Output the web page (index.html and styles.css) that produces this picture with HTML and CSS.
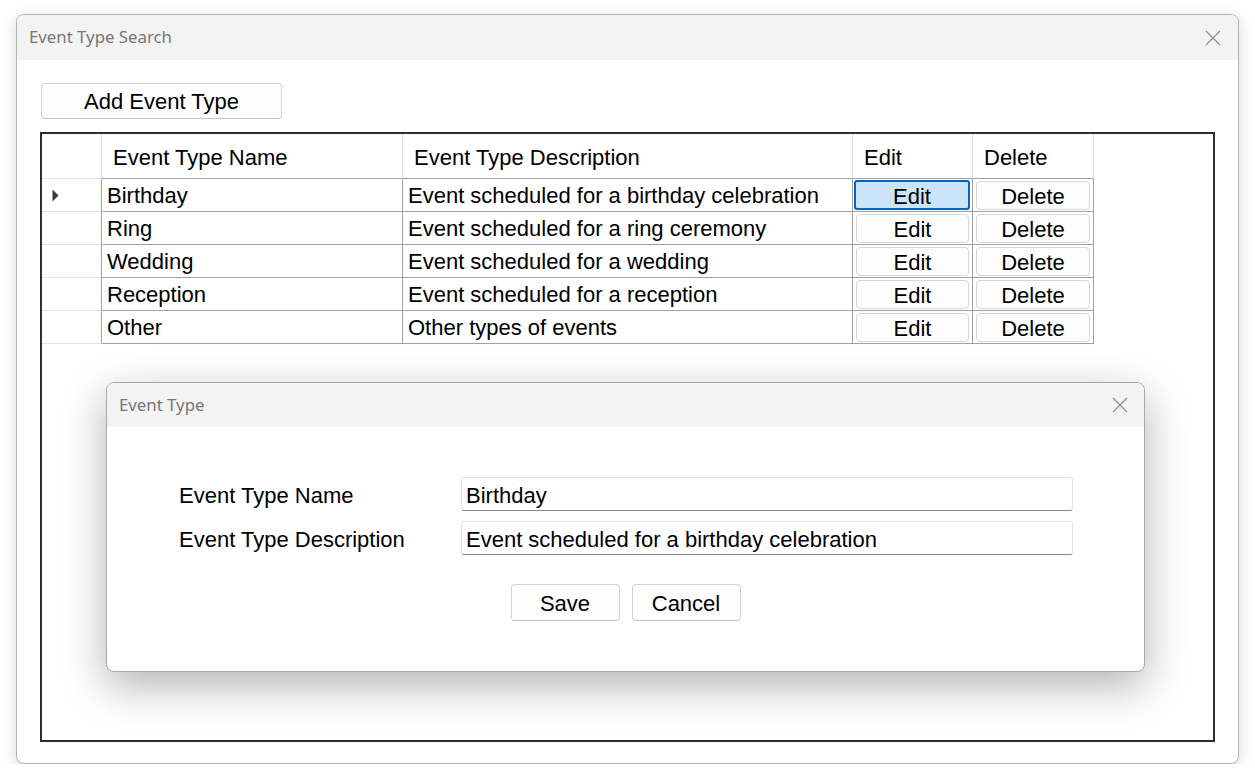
FILE: index.html
```html
<!DOCTYPE html>
<html>
<head>
<meta charset="utf-8">
<title>Event Type Search</title>
<link rel="stylesheet" href="styles.css">
</head>
<body>
<div class="window">
  <div class="titlebar">
    <span class="title">Event Type Search</span>
    <svg class="close" width="16" height="16" viewBox="0 0 16 16"><path d="M1 1 L15 15 M15 1 L1 15" stroke="#8a8a8a" stroke-width="1.1" fill="none"/></svg>
  </div>
  <div class="content">
    <button class="btn add">Add Event Type</button>
    <div class="panel">
      <div class="grid">
        <div class="hcell rh"></div>
        <div class="hcell">Event Type Name</div>
        <div class="hcell">Event Type Description</div>
        <div class="hcell">Edit</div>
        <div class="hcell">Delete</div>

        <div class="cell rh"><svg class="arrow" width="7" height="13" viewBox="0 0 7 13"><path d="M0.5 0.5 L6.5 6.5 L0.5 12.5 Z" fill="#3a3a3a"/></svg></div>
        <div class="cell">Birthday</div>
        <div class="cell">Event scheduled for a birthday celebration</div>
        <div class="cell bcell"><button class="gbtn sel">Edit</button></div>
        <div class="cell bcell"><button class="gbtn">Delete</button></div>

        <div class="cell rh"></div>
        <div class="cell">Ring</div>
        <div class="cell">Event scheduled for a ring ceremony</div>
        <div class="cell bcell"><button class="gbtn">Edit</button></div>
        <div class="cell bcell"><button class="gbtn">Delete</button></div>

        <div class="cell rh"></div>
        <div class="cell">Wedding</div>
        <div class="cell">Event scheduled for a wedding</div>
        <div class="cell bcell"><button class="gbtn">Edit</button></div>
        <div class="cell bcell"><button class="gbtn">Delete</button></div>

        <div class="cell rh"></div>
        <div class="cell">Reception</div>
        <div class="cell">Event scheduled for a reception</div>
        <div class="cell bcell"><button class="gbtn">Edit</button></div>
        <div class="cell bcell"><button class="gbtn">Delete</button></div>

        <div class="cell rh"></div>
        <div class="cell">Other</div>
        <div class="cell">Other types of events</div>
        <div class="cell bcell"><button class="gbtn">Edit</button></div>
        <div class="cell bcell"><button class="gbtn">Delete</button></div>
      </div>
    </div>
  </div>

  <div class="dialog">
    <div class="titlebar dtitle">
      <span class="title">Event Type</span>
      <svg class="close" width="16" height="16" viewBox="0 0 16 16"><path d="M1 1 L15 15 M15 1 L1 15" stroke="#8a8a8a" stroke-width="1.1" fill="none"/></svg>
    </div>
    <div class="dbody">
      <div class="form">
        <label class="lbl">Event Type Name</label>
        <div class="input">Birthday</div>
        <label class="lbl">Event Type Description</label>
        <div class="input">Event scheduled for a birthday celebration</div>
      </div>
      <div class="actions">
        <button class="btn act">Save</button>
        <button class="btn act">Cancel</button>
      </div>
    </div>
  </div>
</div>
</body>
</html>
```

FILE: styles.css
```css
body {
  margin: 0;
  background: #ffffff;
  font-family: "Liberation Sans", Arial, sans-serif;
}

.window {
  position: relative;
  margin: 14px 0 0 16px;
  width: 1223px;
  height: 750px;
  box-sizing: border-box;
  border: 1px solid #b3b3b3;
  border-radius: 8px;
  background: #ffffff;
  box-shadow: 0 3px 14px rgba(0, 0, 0, 0.16);
  display: flex;
  flex-direction: column;
}

.titlebar {
  height: 45px;
  flex: none;
  background: #f3f3f3;
  border-radius: 7px 7px 0 0;
  display: flex;
  align-items: center;
  justify-content: space-between;
  padding: 0 17px 0 12px;
}

.title {
  font-family: "Segoe UI", "Noto Sans", sans-serif;
  font-size: 16.8px;
  color: #777777;
  margin-top: -2px;
}

.close {
  display: block;
}

.content {
  flex: 1;
  display: flex;
  flex-direction: column;
  align-items: flex-start;
  gap: 13px;
  padding: 23px 23px 21px 23px;
  min-height: 0;
}

.btn {
  font-family: "Liberation Sans", Arial, sans-serif;
  font-size: 22px;
  color: #000;
  background: #fdfdfd;
  border: 1px solid #d3d3d3;
  border-bottom-color: #c2c2c2;
  border-radius: 4px;
  padding: 2px 0 0 0;
  box-sizing: border-box;
}

.add {
  width: 241px;
  height: 36px;
  margin-left: 1px;
}

.panel {
  align-self: stretch;
  flex: 1;
  border: 2px solid #2e2e2e;
  background: #ffffff;
}

.grid {
  display: grid;
  grid-template-columns: 60px 301px 450px 120px 121px;
  grid-template-rows: 45px repeat(5, 33px);
  font-size: 22px;
  color: #000;
}

.hcell {
  box-sizing: border-box;
  border-right: 1px solid #dcdcdc;
  border-bottom: 1px solid #a0a0a0;
  padding: 3px 0 0 11px;
  display: flex;
  align-items: center;
  white-space: nowrap;
}

.cell {
  box-sizing: border-box;
  border-right: 1px solid #a0a0a0;
  border-bottom: 1px solid #a0a0a0;
  padding: 2px 0 0 5px;
  display: flex;
  align-items: center;
  white-space: nowrap;
}

.cell.rh {
  border-bottom-color: #e4e4e4;
  padding: 1px 0 0 10px;
}

.hcell.rh {
  border-bottom-color: #e4e4e4;
}

.arrow {
  display: block;
}

.bcell {
  padding: 1px 2px 1px 1px;
  align-items: stretch;
}

.gbtn {
  flex: 1;
  font-family: "Liberation Sans", Arial, sans-serif;
  font-size: 22px;
  color: #000;
  background: #fdfdfd;
  border: 1px solid #d6d6d6;
  border-radius: 4px;
  margin: 1px 1px 0 2px;
  padding: 2px 0 0 0;
  box-sizing: border-box;
}

.gbtn.sel {
  background: #cce4f7;
  border: 2px solid #0067c0;
  border-radius: 3px;
  margin: 0;
}

.dialog {
  position: absolute;
  left: 89px;
  top: 367px;
  width: 1039px;
  height: 290px;
  box-sizing: border-box;
  border: 1px solid #a8a8a8;
  border-radius: 8px;
  background: #ffffff;
  box-shadow: 0 14px 44px rgba(0, 0, 0, 0.3);
  display: flex;
  flex-direction: column;
}

.dtitle {
  height: 44px;
  padding: 0 16px 0 12px;
}

.dbody {
  flex: 1;
  display: flex;
  flex-direction: column;
  padding-top: 50px;
}

.form {
  margin-left: 72px;
  display: grid;
  grid-template-columns: 282px 612px;
  grid-auto-rows: 34px;
  row-gap: 10px;
}

.lbl {
  font-size: 22px;
  color: #000;
  display: flex;
  align-items: center;
  padding-top: 3px;
}

.input {
  box-sizing: border-box;
  border: 1px solid #e2e2e2;
  border-bottom: 1px solid #868686;
  border-radius: 3px;
  padding: 3px 0 0 4px;
  font-size: 22px;
  color: #000;
  display: flex;
  align-items: center;
  white-space: nowrap;
}

.actions {
  display: flex;
  justify-content: center;
  gap: 12px;
  margin-top: 29px;
}

.act {
  width: 109px;
  height: 37px;
}
```
